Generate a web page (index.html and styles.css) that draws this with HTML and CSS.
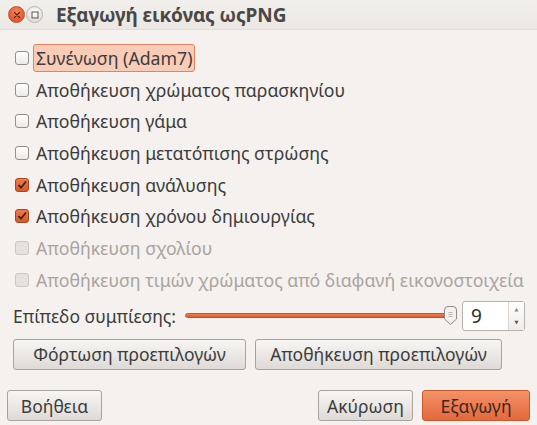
FILE: index.html
```html
<!DOCTYPE html>
<html lang="el">
<head>
<meta charset="utf-8">
<link rel="stylesheet" href="styles.css">
</head>
<body>
<div class="window">
  <div class="titlebar">
    <span class="wbtn close"><svg width="8" height="8" viewBox="0 0 8 8"><path d="M1.5 1.5 L6.5 6.5 M6.5 1.5 L1.5 6.5" stroke="#5a2412" stroke-width="1.3" stroke-linecap="round"/></svg></span>
    <span class="wbtn max"><svg width="8" height="8" viewBox="0 0 8 8"><rect x="1" y="1" width="6" height="6" fill="none" stroke="#5a5652" stroke-width="1"/></svg></span>
    <span class="title">Εξαγωγή εικόνας ωςPNG</span>
  </div>
  <div class="content">
    <div class="options">
      <div class="row"><span class="cb"></span><span class="label focus">Συνένωση (Adam7)</span></div>
      <div class="row"><span class="cb"></span><span class="label">Αποθήκευση χρώματος παρασκηνίου</span></div>
      <div class="row"><span class="cb"></span><span class="label">Αποθήκευση γάμα</span></div>
      <div class="row"><span class="cb"></span><span class="label">Αποθήκευση μετατόπισης στρώσης</span></div>
      <div class="row"><span class="cb checked"><svg width="12" height="12" viewBox="0 0 12 12"><path d="M2.5 6 L5 8.7 L10 2.5" fill="none" stroke="#3a2418" stroke-width="1.8"/></svg></span><span class="label">Αποθήκευση ανάλυσης</span></div>
      <div class="row"><span class="cb checked"><svg width="12" height="12" viewBox="0 0 12 12"><path d="M2.5 6 L5 8.7 L10 2.5" fill="none" stroke="#3a2418" stroke-width="1.8"/></svg></span><span class="label">Αποθήκευση χρόνου δημιουργίας</span></div>
      <div class="row disabled"><span class="cb"></span><span class="label">Αποθήκευση σχολίου</span></div>
      <div class="row disabled"><span class="cb"></span><span class="label">Αποθήκευση τιμών χρώματος από διαφανή εικονοστοιχεία</span></div>
    </div>
    <div class="compress">
      <span class="clabel">Επίπεδο συμπίεσης:</span>
      <div class="slider">
        <div class="track"></div>
        <span class="thumb"><svg width="13" height="19" viewBox="0 0 13 19"><path d="M0.5 4 Q0.5 0.5 4 0.5 L9 0.5 Q12.5 0.5 12.5 4 L12.5 13 L6.5 18.5 L0.5 13 Z" fill="#f3f1ef" stroke="#8f8a85"/><path d="M4.5 6.5 H8.5 M4.5 8.5 H8.5 M4.5 10.5 H8.5" stroke="#aaa5a0" stroke-width="0.8"/></svg></span>
      </div>
      <div class="spin">
        <span class="spinval">9</span>
        <span class="arrows"><span class="up">▲</span><span class="down">▼</span></span>
      </div>
    </div>
    <div class="presets">
      <button class="btn preset">Φόρτωση προεπιλογών</button>
      <button class="btn preset2">Αποθήκευση προεπιλογών</button>
    </div>
  </div>
  <div class="actions">
    <button class="btn help">Βοήθεια</button>
    <div class="spacer"></div>
    <button class="btn cancel">Ακύρωση</button>
    <button class="btn export">Εξαγωγή</button>
  </div>
</div>
</body>
</html>
```

FILE: styles.css
```css
* { box-sizing: border-box; }
html, body { margin: 0; padding: 0; }
body {
  width: 537px;
  height: 425px;
  background: #f4f1ee;
  font-family: "Noto Sans", "DejaVu Sans", sans-serif;
  color: #3c3c3c;
  overflow: hidden;
}
.window {
  width: 537px;
  height: 425px;
  display: flex;
  flex-direction: column;
}
.titlebar {
  height: 30px;
  display: flex;
  align-items: center;
  padding-left: 8px;
  background: linear-gradient(#f1efec, #ebe8e4);
  border-bottom: 1px solid #e2ddd8;
}
.wbtn {
  width: 17px;
  height: 17px;
  border-radius: 50%;
  display: flex;
  align-items: center;
  justify-content: center;
}
.wbtn.close {
  background: radial-gradient(circle at 50% 35%, #f88a5e, #e1562a 70%);
  border: 1px solid #c4522c;
}
.wbtn.max {
  margin-left: 1px;
  background: radial-gradient(circle at 50% 35%, #ffffff, #dedbd7 80%);
  border: 1px solid #b9b4af;
}
.title {
  margin-left: 13px;
  font-weight: bold;
  font-size: 19px;
  color: #4a4744;
  letter-spacing: -0.1px;
}
.content {
  padding: 12px 12px 0 13px;
  display: flex;
  flex-direction: column;
}
.options {
  display: flex;
  flex-direction: column;
}
.row {
  height: 31.7px;
  display: flex;
  align-items: center;
  font-size: 17.7px;
}
.cb {
  width: 14px;
  height: 14px;
  margin-left: 2px;
  margin-right: 7px;
  border: 1px solid #948f8a;
  border-radius: 3px;
  background: linear-gradient(#ffffff, #ece9e6);
  display: flex;
  align-items: center;
  justify-content: center;
  flex: none;
}
.cb.checked {
  background: linear-gradient(#f07a48, #d9582a);
  border-color: #a9461e;
}
.row.disabled { color: #aaa49e; }
.row.disabled .cb {
  background: #e6e1dd;
  border-color: #cdc7c2;
}
.label {
  padding: 1px 3px;
  margin-left: -3px;
  white-space: nowrap;
}
.label.focus {
  background: #f9ccb8;
  border: 1px solid #e9825a;
  border-radius: 3px;
  padding: 1px 2px;
  margin-left: -3px;
}
.compress {
  margin-top: 5px;
  height: 30px;
  display: flex;
  align-items: center;
}
.clabel {
  font-size: 17.5px;
  white-space: nowrap;
  width: 162px;
}
.slider {
  position: relative;
  width: 272px;
  height: 30px;
  margin-left: 10px;
  display: flex;
  align-items: center;
}
.track {
  width: 264px;
  height: 5px;
  border-radius: 3px;
  background: linear-gradient(#f08050, #dc5a2a);
  border: 1px solid #c65327;
}
.thumb {
  position: absolute;
  left: 259px;
  top: 5px;
  display: flex;
}
.spin {
  width: 63px;
  height: 30px;
  margin-left: 5px;
  border: 1px solid #b6b0aa;
  border-radius: 3px;
  background: #ffffff;
  display: flex;
}
.spinval {
  flex: 1;
  font-size: 19px;
  padding-left: 8px;
  display: flex;
  align-items: center;
  color: #2e2e2e;
}
.arrows {
  width: 16px;
  border-left: 1px solid #dcd7d2;
  background: linear-gradient(#ffffff, #efece9);
  display: flex;
  flex-direction: column;
  justify-content: center;
  align-items: center;
  font-size: 5px;
  color: #8c8680;
  gap: 7px;
}
.arrows .down { color: #55504c; }
.presets {
  margin-top: 8px;
  display: flex;
  gap: 9px;
}
.btn {
  font-family: "Noto Sans", "DejaVu Sans", sans-serif;
  font-size: 17.5px;
  color: #3c3c3c;
  height: 31px;
  border: 1px solid #a9a39d;
  border-radius: 3px;
  background: linear-gradient(#f7f6f5, #dedad6);
  padding: 0;
  display: flex;
  align-items: center;
  justify-content: center;
  white-space: nowrap;
}
.preset { width: 233px; }
.preset2 { width: 247px; }
.actions {
  margin-top: auto;
  padding: 0 7px 4px 7px;
  display: flex;
  align-items: center;
}
.spacer { flex: 1; }
.help { width: 95px; }
.cancel { width: 95px; }
.export {
  width: 108px;
  margin-left: 9px;
  background: linear-gradient(#f4916a, #e4683b);
  border-color: #c9582d;
  color: #3a2820;
}
```
